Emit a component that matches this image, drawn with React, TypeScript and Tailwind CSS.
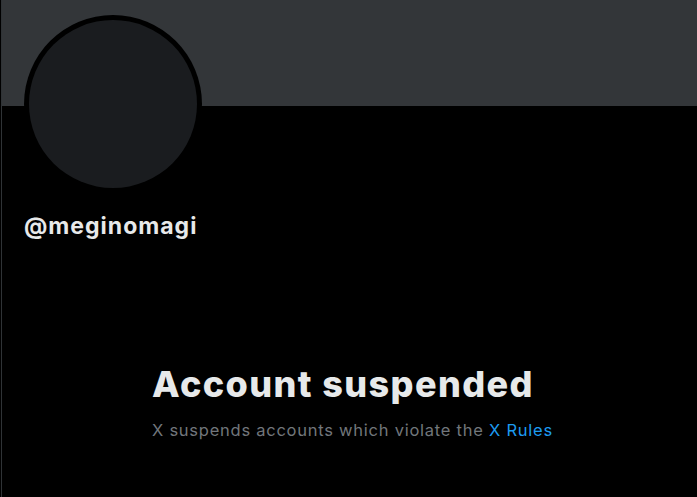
import React from 'react';

const App: React.FC = () => {
  return (
    <div className="min-h-screen w-[697px] h-[497px] bg-black overflow-hidden pl-px">
      <div className="h-full border-l border-[#2f3336] font-['Inter',sans-serif]">
        {/* Banner */}
        <div className="h-[106px] bg-[#333639]" />

        {/* Avatar + handle */}
        <div className="px-[22px]">
          <div className="-mt-[91px] w-[178px] h-[178px] rounded-full bg-black p-[5px]">
            <div className="w-full h-full rounded-full bg-[#1a1c1f]" />
          </div>
          <div className="mt-[19px] text-[23px] leading-[28px] font-bold tracking-[1px] text-[#e7e9ea]">
            @meginomagi
          </div>
        </div>

        {/* Suspended message */}
        <div className="ml-[150px] mt-[122px]">
          <h2 className="text-[36px] leading-[44px] font-extrabold tracking-[1.4px] text-[#e7e9ea] whitespace-nowrap">
            Account suspended
          </h2>
          <p className="mt-[14px] text-[16.5px] leading-[20px] tracking-[0.75px] text-[#71767b] whitespace-nowrap">
            X suspends accounts which violate the{' '}
            <span className="text-[#1d9bf0]">X Rules</span>
          </p>
        </div>
      </div>
    </div>
  );
};

export default App;
